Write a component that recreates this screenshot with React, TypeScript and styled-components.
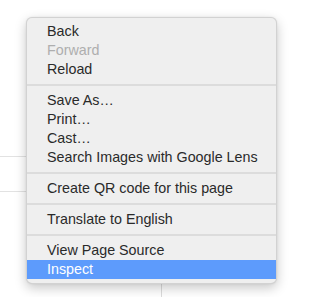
import React from "react";
import styled, { createGlobalStyle } from "styled-components";

const Global = createGlobalStyle`
  html, body { margin: 0; padding: 0; background: #ffffff; }
  body { font-family: "Liberation Sans", Arial, sans-serif; }
`;

const Page = styled.div`
  position: relative;
  width: 320px;
  height: 297px;
  overflow: hidden;
  background: #ffffff;
`;

const Backdrop = styled.div`
  display: flex;
  flex-direction: column;
  padding-top: 156px;
`;

const TableRow = styled.div`
  width: 200px;
  height: 34px;
  border-top: 1px solid #e2e2e2;
  border-bottom: 1px solid #e2e2e2;
`;

const ColumnRule = styled.div`
  margin-left: 161px;
  width: 1px;
  height: 120px;
  background: #dcdcdc;
`;

const Menu = styled.div`
  position: absolute;
  left: 26px;
  top: 17px;
  width: 251px;
  box-sizing: border-box;
  padding: 4px 0 4px;
  background: #efefef;
  border: 1px solid rgba(0, 0, 0, 0.12);
  border-radius: 6px;
  box-shadow: 0 4px 12px rgba(0, 0, 0, 0.22), 0 0 2px rgba(0, 0, 0, 0.08);
  display: flex;
  flex-direction: column;
`;

const Item = styled.div<{ $disabled?: boolean; $active?: boolean }>`
  height: 19px;
  line-height: 19px;
  padding-left: 20px;
  font-size: 14.3px;
  color: ${(p) => (p.$active ? "#ffffff" : p.$disabled ? "#aeaeae" : "#2a2a2a")};
  background: ${(p) => (p.$active ? "#5d9bfc" : "transparent")};
  white-space: nowrap;
`;

const Separator = styled.div`
  height: 2px;
  margin: 5px 0 5px;
  background: #dcdcdc;
`;

type Entry = { label: string; disabled?: boolean; active?: boolean } | "sep";

const entries: Entry[] = [
  { label: "Back" },
  { label: "Forward", disabled: true },
  { label: "Reload" },
  "sep",
  { label: "Save As…" },
  { label: "Print…" },
  { label: "Cast…" },
  { label: "Search Images with Google Lens" },
  "sep",
  { label: "Create QR code for this page" },
  "sep",
  { label: "Translate to English" },
  "sep",
  { label: "View Page Source" },
  { label: "Inspect", active: true },
];

export default function App() {
  return (
    <Page>
      <Global />
      <Backdrop>
        <TableRow />
        <ColumnRule />
      </Backdrop>
      <Menu>
        {entries.map((e, i) =>
          e === "sep" ? (
            <Separator key={i} />
          ) : (
            <Item key={i} $disabled={e.disabled} $active={e.active}>
              {e.label}
            </Item>
          )
        )}
      </Menu>
    </Page>
  );
}
